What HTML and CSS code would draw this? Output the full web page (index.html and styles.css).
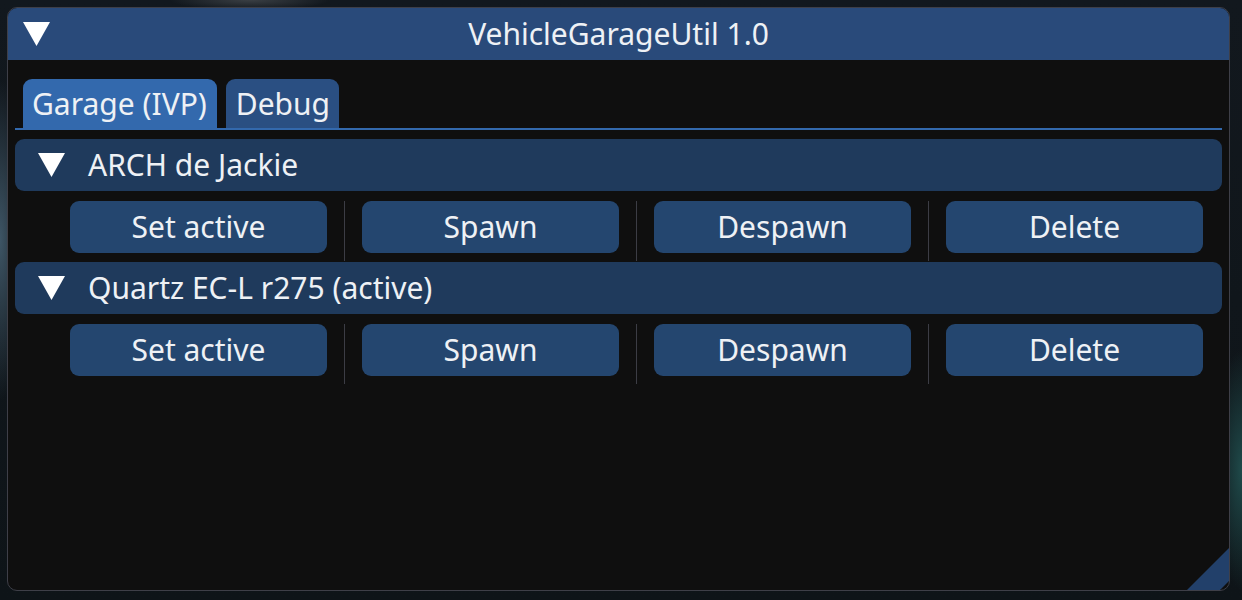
FILE: index.html
```html
<!DOCTYPE html>
<html>
<head>
<meta charset="utf-8">
<link rel="stylesheet" href="styles.css">
</head>
<body>
<div class="scene">
  <div class="window">
    <div class="titlebar">
      <svg class="title-arrow" width="27" height="25" viewBox="0 0 27 25"><polygon points="0,0 27,0 13.5,24" fill="#ffffff"/></svg>
      <span class="title-text">VehicleGarageUtil 1.0</span>
    </div>
    <div class="content">
      <div class="tabbar">
        <div class="tab tab-active">Garage (IVP)</div>
        <div class="tab">Debug</div>
      </div>
      <div class="tabline"></div>

      <div class="header">
        <svg class="hdr-arrow" width="27" height="25" viewBox="0 0 27 25"><polygon points="0,0 27,0 13.5,24" fill="#ffffff"/></svg>
        <span class="hdr-text">ARCH de Jackie</span>
      </div>
      <div class="btnrow">
        <div class="btn">Set active</div>
        <div class="sep"></div>
        <div class="btn">Spawn</div>
        <div class="sep"></div>
        <div class="btn">Despawn</div>
        <div class="sep"></div>
        <div class="btn">Delete</div>
      </div>

      <div class="header">
        <svg class="hdr-arrow" width="27" height="25" viewBox="0 0 27 25"><polygon points="0,0 27,0 13.5,24" fill="#ffffff"/></svg>
        <span class="hdr-text">Quartz EC-L r275 (active)</span>
      </div>
      <div class="btnrow">
        <div class="btn">Set active</div>
        <div class="sep"></div>
        <div class="btn">Spawn</div>
        <div class="sep"></div>
        <div class="btn">Despawn</div>
        <div class="sep"></div>
        <div class="btn">Delete</div>
      </div>
    </div>
    <svg class="grip" width="42" height="42" viewBox="0 0 42 42"><polygon points="42,0 42,33 33,42 0,42" fill="#22406a"/></svg>
  </div>
</div>
</body>
</html>
```

FILE: styles.css
```css
html, body {
  margin: 0;
  padding: 0;
}
body {
  width: 1242px;
  height: 600px;
  overflow: hidden;
  background: #10161c;
  font-family: "Noto Sans", "Open Sans", sans-serif;
  color: #eef1f5;
}
.scene {
  width: 1242px;
  height: 600px;
  padding: 7px 0 0 7px;
  box-sizing: border-box;
  background:
    radial-gradient(ellipse 30px 160px at 0px 240px, #3e5565 0%, rgba(62,85,101,0) 100%),
    radial-gradient(ellipse 30px 120px at 1242px 470px, #1f4a4a 0%, rgba(31,74,74,0) 100%),
    radial-gradient(ellipse 80px 10px at 250px 0px, #3a3f44 0%, rgba(58,63,68,0) 100%),
    linear-gradient(180deg, #12181e 0%, #0e1418 100%);
}
.window {
  position: relative;
  width: 1223px;
  height: 584px;
  box-sizing: border-box;
  border: 1px solid #3e3f48;
  border-radius: 10px;
  background: #0f0f0f;
  overflow: hidden;
}
.titlebar {
  position: relative;
  height: 52px;
  background: #294a7a;
  display: flex;
  align-items: center;
  justify-content: center;
}
.title-arrow {
  position: absolute;
  left: 15px;
  top: 14px;
}
.title-text {
  font-size: 30px;
  line-height: 1;
  margin-top: -1px;
}
.content {
  padding: 19px 7px 0 7px;
}
.tabbar {
  display: flex;
  gap: 9px;
  padding-left: 8px;
  height: 49px;
  align-items: flex-end;
}
.tab {
  height: 49px;
  box-sizing: border-box;
  padding: 0 9px 0 10px;
  background: #2a4f82;
  border-radius: 9px 9px 0 0;
  font-size: 30px;
  display: flex;
  align-items: center;
  line-height: 1;
}
.tab-active {
  background: #3369ad;
  padding: 0 10px 0 9px;
}
.tabline {
  height: 2px;
  background: #3369ad;
}
.header {
  margin-top: 9px;
  height: 52px;
  border-radius: 9px;
  background: #1f3a5c;
  display: flex;
  align-items: center;
}
.hdr-arrow {
  margin-left: 23px;
  margin-right: 23px;
}
.hdr-text {
  font-size: 30px;
  line-height: 1;
  margin-top: -1px;
}
.btnrow {
  margin-top: 10px;
  height: 52px;
  display: flex;
  align-items: flex-start;
  padding-left: 55px;
}
.btn {
  width: 257px;
  height: 52px;
  flex: none;
  border-radius: 9px;
  background: #24466f;
  display: flex;
  align-items: center;
  justify-content: center;
  font-size: 30px;
  line-height: 1;
  padding-bottom: 1px;
  box-sizing: border-box;
}
.sep {
  flex: none;
  width: 1px;
  height: 60px;
  margin: 0 17px;
  background: #3c3d45;
}
.grip {
  position: absolute;
  right: 0;
  bottom: 0;
}
```
